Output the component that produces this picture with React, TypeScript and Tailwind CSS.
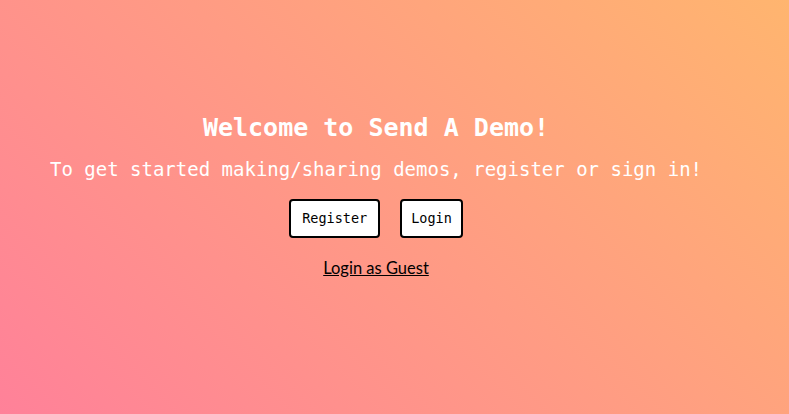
export default function App() {
  return (
    <div className="min-h-screen w-full bg-[linear-gradient(45deg,#ff8199,#ffb56f)]">
      <div className="flex w-[752px] flex-col items-center pt-[112px]">
        <h1 className="font-['DejaVu_Sans_Mono',monospace] text-[25px] font-bold leading-[32px] text-white">
          Welcome to Send A Demo!
        </h1>
        <p className="mt-[13px] font-['DejaVu_Sans_Mono',monospace] text-[19px] leading-[24px] text-white">
          To get started making/sharing demos, register or sign in!
        </p>
        <div className="mt-[18px] flex gap-[20px]">
          <button className="rounded-[4px] border-2 border-black bg-white px-[11px] py-[9px] font-['DejaVu_Sans_Mono',monospace] text-[13.5px] leading-[17px] text-black">
            Register
          </button>
          <button className="rounded-[4px] border-2 border-black bg-white px-[9px] py-[9px] font-['DejaVu_Sans_Mono',monospace] text-[13.5px] leading-[17px] text-black">
            Login
          </button>
        </div>
        <a className="mt-[19px] font-['Lato',sans-serif] text-[16.5px] leading-[22px] text-black underline">
          Login as Guest
        </a>
      </div>
    </div>
  );
}
